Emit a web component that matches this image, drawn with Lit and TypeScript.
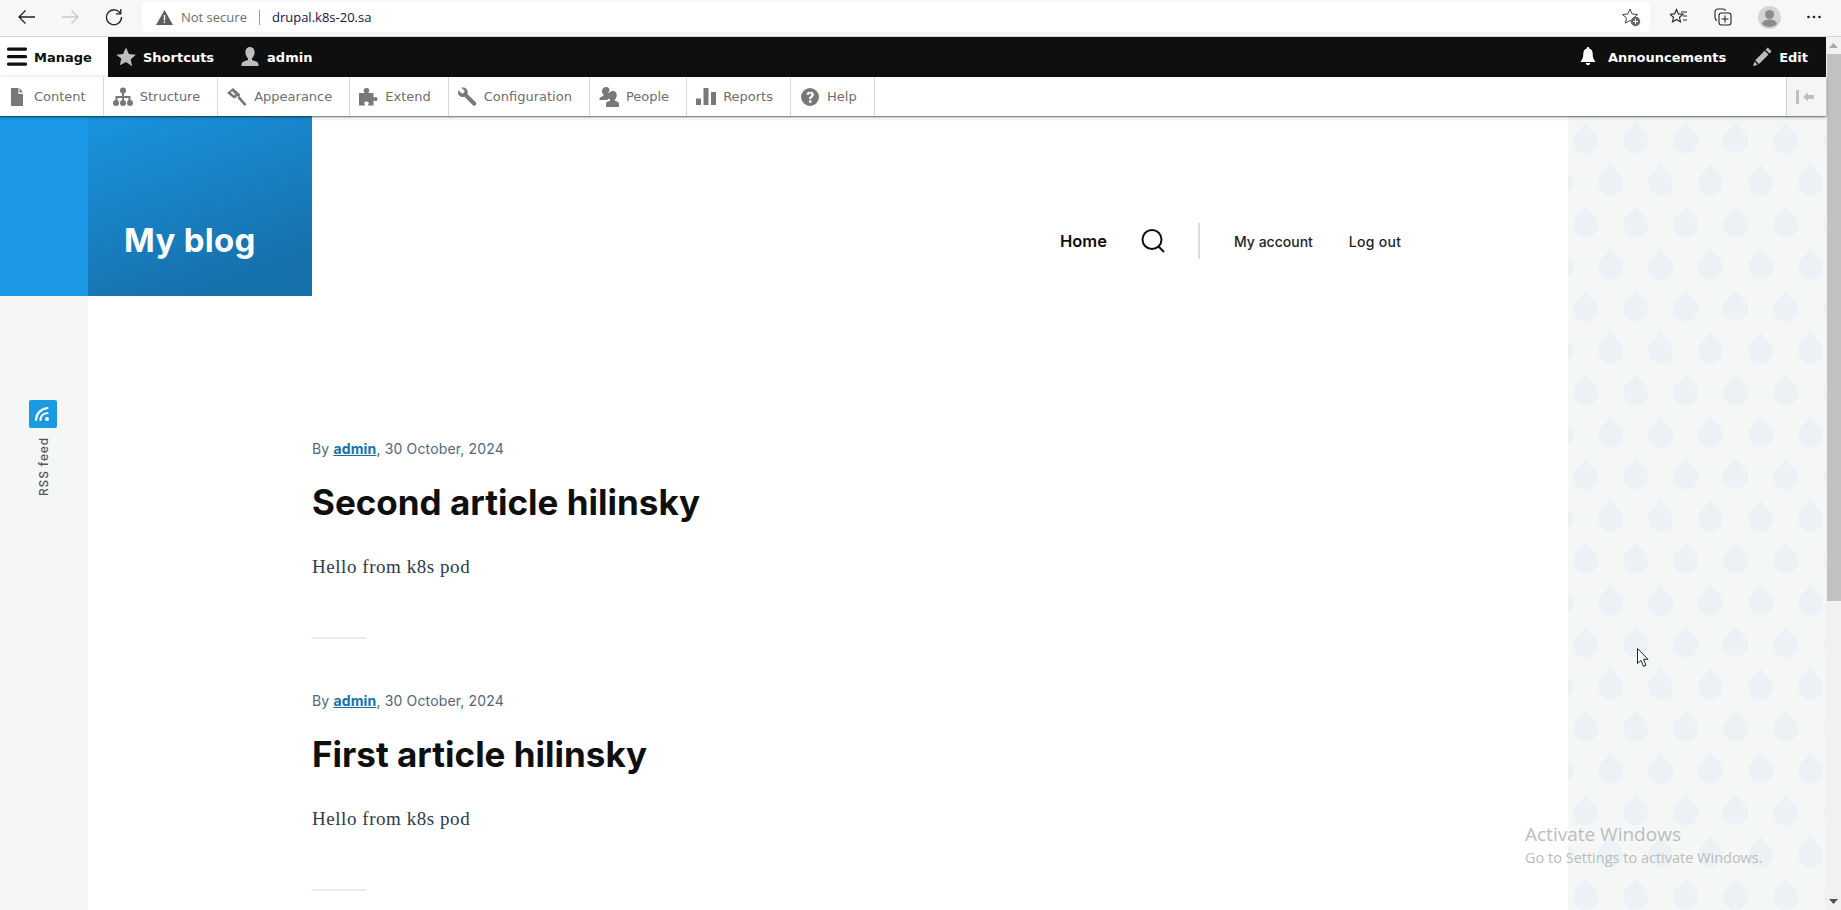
import { LitElement, html, css, svg } from "lit";
import { customElement } from "lit/decorators.js";

const G = "#787878";
const icons: Record<string, unknown> = {
  star: svg`<path fill="#bdbdbd" d="M10 0.5l2.9 6.4 6.9.8-5.1 4.7 1.4 6.9L10 15l-6.1 3.3 1.4-6.9L.2 7.7l6.9-.8z"/>`,
  person: svg`<path fill="#bdbdbd" d="M10 0c3 0 4.6 2.3 4.6 5.2 0 2.6-1.2 5-2.6 6.2v1.6c2.5 1 6.5 1.6 6.5 4.4V19h-17v-1.6c0-2.800 4-3.400 6.500-4.400v-1.600C6.600 10.200 5.400 7.800 5.400 5.200 5.400 2.300 7 0 10 0z"/>`,
  bell: svg`<path fill="#fff" d="M10 0c.8 0 1.200.6 1.200 1.400 2.600.6 3.500 2.800 3.500 5.600 0 4 1.300 6.200 3 8H2.300c1.700-1.800 3-4 3-8 0-2.800.9-5 3.500-5.600C8.800.6 9.200 0 10 0zM7.800 16h4.400c0 1.300-1 2.200-2.200 2.200S7.800 17.300 7.800 16z"/>`,
  pencil: svg`<path fill="#bdbdbd" d="M14.800.6l3.800 3.800-2.200 2.200-3.800-3.800zM11.700 3.700l3.800 3.800L6 17l-3.800-3.800zM1.500 14.600l3.100 3.100L0 19.200z"/>`,
  file: svg`<path fill="${G}" d="M4 1h7.500v6H16v12H4zM12.500 1L16 5.500h-3.500z"/>`,
  tree: svg`<g fill="${G}"><circle cx="10" cy="3.500" r="3"/><circle cx="3" cy="16" r="3"/><circle cx="10" cy="16" r="3"/><circle cx="17" cy="16" r="3"/><path d="M9 5h2v4h6.500v6h-2v-4H11v4H9v-4H4.500v4h-2V9H9z"/></g>`,
  hammer: svg`<path fill="${G}" d="M6 1l7.500 6.800-2 2.200-1.200-1-2 2.200-2-.2L0 6zM3.800 5.600l3.300 3 1.300-1.400-3.300-3zM10.500 11l1.800-2 7.200 8.200-1.900 1.800z"/>`,
  puzzle: svg`<path fill="${G}" d="M1 6h5c.6 0 .6-.7.1-1.300C5 3.400 6 1 8.500 1S12 3.400 10.900 4.700c-.5.6-.5 1.300.1 1.300h4.500v4c0 .7.700.8 1.200.300 1.300-1 2.800-.1 2.800 1.700s-1.500 2.700-2.800 1.700c-.5-.5-1.200-.4-1.200.3v4.500h-5c-.6 0-.6-.7-.1-1.300C11.500 16 10.500 14.500 8.500 14.500S5.500 16 6.600 17.200c.5.600.5 1.300-.1 1.300H1z"/>`,
  wrench: svg`<path fill="${G}" d="M6 .5c2.600 0 4.700 2.100 4.700 4.700 0 .6-.1 1.200-.3 1.700l8.400 8.400c.8.800.8 2-.1 2.800s-2 .9-2.800.1L7.500 9.700c-.6.2-1 .3-1.700.3C3.200 10 1 7.900 1 5.200c0-.7.100-1.300.4-1.900l3.300 3.300 2.300-.6.600-2.300L4.300.8c.5-.2 1.100-.3 1.700-.3z"/>`,
  people: svg`<path fill="${G}" d="M7.500 0c2 0 3 1.500 3 3.400-.5.700-1 1.800-1 3.100 0 1.500.5 2.700 1.300 3.800v.9c-1 .4-2 .9-2.800 1.800H.5v-1.200c0-1.800 2.500-2.200 4-2.900v-.9C3.500 7 3 5.500 3 3.800 3 1.500 5 0 7.500 0zM14 4c2.400 0 3.800 1.800 3.800 4 0 1.800-.7 3.500-1.800 4.500v1.300c1.500.7 4 1.200 4 3V20H7v-3.200c0-1.800 2.500-2.300 4-3v-1.300c-1.100-1-1.800-2.700-1.800-4.500C9.200 5.800 11.600 4 14 4z"/>`,
  bars: svg`<path fill="${G}" d="M0 11.500h5V18H0zM7.500 1h5v17h-5zM15 5h5v13h-5z"/>`,
  help: svg`<path fill="${G}" fill-rule="evenodd" d="M10 1a9 9 0 1 1 0 18 9 9 0 0 1 0-18zM9 13.300v2.500h2.400v-2.500zM10.200 4.500c-2 0-3.500 1-3.800 3l2.300.4c.2-.9.700-1.400 1.400-1.400.8 0 1.300.5 1.300 1.200 0 .6-.4 1-1 1.500-1 .8-1.400 1.500-1.400 2.900h2.300c0-.8.200-1.100 1-1.700 1-.8 1.600-1.600 1.600-2.800 0-2-1.700-3.100-4.200-3.100z"/>`,
};

const tabs: [string, string][] = [
  ["file", "Content"], ["tree", "Structure"], ["hammer", "Appearance"], ["puzzle", "Extend"],
  ["wrench", "Configuration"], ["people", "People"], ["bars", "Reports"], ["help", "Help"],
];

const ic = (n: string) => html`<svg class="ic" viewBox="0 0 20 20">${icons[n]}</svg>`;

@customElement("app-root")
export class AppRoot extends LitElement {
  static styles = css`
    :host { display: block; width: 1841px; height: 910px; overflow: hidden; position: relative; font-family: "DejaVu Sans", sans-serif; background: #fff; }
    .chrome { height: 34px; padding-bottom: 2px; border-bottom: 1px solid #d4d4d4; background: #f7f7f7; display: flex; align-items: center; font-family: "Open Sans", sans-serif; }
    .chrome svg { display: block; flex: none; }
    .navs { width: 142px; display: flex; flex: none; padding-left: 17px; gap: 25px; box-sizing: border-box; align-items: center; }
    .addr { width: 1508px; height: 30px; background: #fff; border-radius: 5px; display: flex; align-items: center; padding-left: 14px; box-sizing: border-box; font-size: 13px; }
    .ns { color: #6d6d6d; margin-left: 8px; }
    .sep { width: 1px; height: 15px; background: #9a9a9a; margin: 0 12px; }
    .url { color: #1a1040; flex: 1; }
    .addr .fav { margin-right: 9px; }
    .tools { display: flex; align-items: center; padding-left: 20px; gap: 26px; }
    .avatar { width: 23px; height: 23px; }

    .body { display: flex; height: 873px; }
    .vp { flex: 1; min-width: 0; display: flex; flex-direction: column; }
    .sb { width: 15px; background: #f1f1f1; display: flex; flex-direction: column; align-items: flex-end; }
    .arr { height: 17px; width: 15px; display: flex; align-items: center; justify-content: center; flex: none; }
    .thumb { height: 547px; width: 14px; background: #c1c1c1; flex: none; }
    .sp { flex: 1; }

    .bar { height: 40px; background: #0f0f0f; display: flex; align-items: center; color: #fff; font-size: 13px; font-weight: 700; flex: none; }
    .ic { width: 20px; height: 20px; display: block; flex: none; }
    .manage { width: 108px; height: 40px; background: #fff; color: #0f0f0f; display: flex; align-items: center; padding-left: 7px; gap: 7px; box-sizing: border-box; }
    .bi { display: flex; align-items: center; gap: 7px; }
    .short { margin-left: 8px; }
    .who { margin-left: 26px; }
    .right { margin-left: auto; display: flex; align-items: center; }
    .ann { gap: 10px; }
    .edit { margin-left: 27px; margin-right: 18px; gap: 6px; }

    .tray { height: 39px; background: #fff; display: flex; flex: none; box-shadow: 0 1px 1px rgba(0,0,0,.35), 0 1px 4px rgba(0,0,0,.3); position: relative; z-index: 2; font-size: 13px; color: #6e6e6e; }
    .tab { display: flex; align-items: center; border-right: 1px solid #d8d8d8; padding: 0 17px 0 9px; gap: 7px; box-sizing: border-box; }
    .tab:first-child { padding-left: 7px; }
    .tab:nth-child(4), .tab:nth-child(5) { padding-left: 8px; }
    .col { margin-left: auto; width: 40px; background: #f5f5f5; border-left: 1px solid #d0d0d0; display: flex; align-items: center; justify-content: center; padding-right: 4px; box-sizing: border-box; }

    .page { flex: 1; min-height: 0; display: grid; grid-template-columns: 88px 1480px 258px; }
    .left { background: #f5f7f7; display: flex; flex-direction: column; align-items: center; }
    .lblue { height: 180px; width: 100%; background: #1b98e6; flex: none; }
    .rss { margin: 104px 2px 0 0; display: flex; flex-direction: column; align-items: center; gap: 9px; color: #55565b; font-family: "Inter", sans-serif; font-size: 12px; font-weight: 500; letter-spacing: .85px; }
    .rssbox { width: 28px; height: 28px; background: #1b9ae4; border-radius: 2px; display: flex; align-items: center; justify-content: center; }
    .rsstext { writing-mode: vertical-rl; transform: rotate(180deg); }

    .main { background: #fff; display: flex; flex-direction: column; font-family: "Inter", sans-serif; }
    .head { height: 180px; display: flex; flex: none; }
    .logo { width: 224px; height: 180px; background: linear-gradient(160deg, #1a94e0 0%, #1670aa 85%); color: #fff; font-size: 33px; font-weight: 700; display: flex; align-items: center; padding: 68px 0 0 36px; box-sizing: border-box; letter-spacing: .3px; }
    .nav { display: flex; align-items: center; margin-left: 748px; height: 36px; align-self: flex-start; margin-top: 107px; }
    .home { font-weight: 600; font-size: 16.500px; color: #0f0f0f; width: 81px; }
    .vr { width: 2px; height: 36px; background: #dbe0e6; margin: 0 34px 0 33px; }
    .acc { font-size: 14px; font-weight: 500; color: #22222a; }
    .acc + .acc { margin-left: 36px; letter-spacing: .3px; }

    .arts { padding: 144px 0 0 224px; }
    .art { height: 252px; }
    .meta { font-size: 14px; line-height: 18px; color: #55657a; letter-spacing: .15px; }
    .meta a { color: #1670aa; font-weight: 700; text-decoration: underline; }
    h2 { margin: 23px 0 0; font-size: 35px; line-height: 42px; font-weight: 700; color: #0f0f0f; }
    .txt { margin: 31px 0 0; font-family: "Liberation Serif", serif; font-size: 19px; line-height: 26px; color: #2f3a48; letter-spacing: .55px; }
    .hr { width: 54px; height: 2px; background: #e9ecef; margin-top: 57px; }

    .pat { background: #f5f7f7; min-height: 0; overflow: hidden; }
    .pat svg { display: block; width: 258px; height: 794px; }

    .wm { position: absolute; left: 1525px; top: 822px; color: #bcbcbc; font-family: "Open Sans", sans-serif; pointer-events: none; z-index: 3; }
    .wm1 { font-size: 19px; line-height: 25px; }
    .wm2 { font-size: 14.500px; line-height: 18px; margin-top: 2px; }
    .cursor { position: absolute; left: 1637px; top: 648px; z-index: 3; display: block; }
  `;

  render() {
    return html`
      <div class="chrome">
        <div class="navs">
          <svg width="19" height="16" viewBox="0 0 19 16"><path fill="none" stroke="#222" stroke-width="1.300" d="M18 8H2M8.500 1.500L2 8l6.500 6.500"/></svg>
          <svg width="19" height="16" viewBox="0 0 19 16"><path fill="none" stroke="#c9c9c9" stroke-width="1.300" d="M1 8h16M10.500 1.500L17 8l-6.500 6.500"/></svg>
          <svg width="18" height="18" viewBox="0 0 18 18"><path fill="none" stroke="#222" stroke-width="1.300" d="M15.500 5.500A7.500 7.500 0 1 0 16.500 9M15.800 1v4.800H11"/></svg>
        </div>
        <div class="addr">
          <svg width="17" height="15" viewBox="0 0 17 15"><path fill="#5f5f5f" fill-rule="evenodd" d="M8.500 0L17 15H0zM7.800 5v5.500h1.400V5zM7.800 11.500V13h1.400v-1.500z"/></svg>
          <span class="ns">Not secure</span><span class="sep"></span><span class="url">drupal.k8s-20.sa</span>
          <svg class="fav" width="19" height="19" viewBox="0 0 19 19"><path fill="none" stroke="#444" d="M8 1l2.200 5 5.300.5-4 3.500 1 5L8 12.500 3.500 15l1-5-4-3.500L5.800 6z"/><circle cx="13.500" cy="13.500" r="4.700" fill="#666"/><path stroke="#fff" d="M13.500 11v5M11 13.500h5"/></svg>
        </div>
        <div class="tools">
          <svg width="18" height="18" viewBox="0 0 18 18"><path fill="none" stroke="#222" stroke-width="1.100" d="M6.500 1.500l1.900 4.400 4.600.4-3.500 3 1 4.600-4-2.400-4 2.400 1-4.600-3.500-3 4.600-.4zM11 4h6M13 8h4M13 12h4"/></svg>
          <svg width="18" height="18" viewBox="0 0 18 18"><path fill="none" stroke="#222" stroke-width="1.100" d="M3 12.500C1.500 12 1 11 1 9.500V4c0-1.800 1.200-3 3-3h5c1.300 0 2.200.6 2.700 1.800M7.500 5h7c1.400 0 2.500 1.100 2.500 2.500v7c0 1.400-1.100 2.500-2.500 2.500h-7C6.100 17 5 15.900 5 14.500v-7C5 6.100 6.100 5 7.500 5zM11 7.500v7M7.500 11h7"/></svg>
          <svg class="avatar" viewBox="0 0 23 23"><circle cx="11.500" cy="11.500" r="11.500" fill="#d6d4d0"/><circle cx="11.500" cy="8.500" r="4.500" fill="#8c8c8c"/><path fill="#8c8c8c" d="M4 18c1-3.500 4-4.500 7.500-4.500S18 14.500 19 18c-2 2-4.500 3-7.500 3S6 20 4 18z"/></svg>
          <svg width="14" height="4" viewBox="0 0 14 4"><g fill="#222"><circle cx="1.500" cy="2" r="1.300"/><circle cx="7" cy="2" r="1.300"/><circle cx="12.500" cy="2" r="1.300"/></g></svg>
        </div>
      </div>

      <div class="body">
        <div class="vp">
          <div class="bar">
            <div class="manage">
              <svg class="ic" viewBox="0 0 20 20"><path fill="#0f0f0f" d="M1.500 0.500h17a1.500 1.500 0 0 1 0 3.200h-17a1.500 1.500 0 0 1 0-3.200zM1.500 8h17a1.500 1.500 0 0 1 0 3.200h-17a1.500 1.500 0 0 1 0-3.200zM1.500 15.500h17a1.500 1.500 0 0 1 0 3.200h-17a1.500 1.500 0 0 1 0-3.200z"/></svg>
              Manage
            </div>
            <div class="bi short">${ic("star")}Shortcuts</div>
            <div class="bi who">${ic("person")}admin</div>
            <div class="right">
              <div class="bi ann">${ic("bell")}Announcements</div>
              <div class="bi edit">${ic("pencil")}Edit</div>
            </div>
          </div>
          <div class="tray">
            ${tabs.map(([i, t]) => html`<div class="tab">${ic(i)}<span>${t}</span></div>`)}
            <div class="col">
              <svg width="18" height="16" viewBox="0 0 18 16"><path fill="#bfbfbf" d="M0 1h3v14H0zM7 8l5-4.500V6h6v4h-6v2.500z"/></svg>
            </div>
          </div>
          <div class="page">
            <div class="left">
              <div class="lblue"></div>
              <div class="rss">
                <div class="rssbox">
                  <svg width="18" height="16" viewBox="0 0 18 16"><g fill="none" stroke="#fff" stroke-width="2.200" stroke-linecap="round"><path d="M2 14C2 8 6.500 3 13.500 2"/><path d="M6.500 14c0-3.500 2.500-6.500 7-7"/></g><circle cx="13" cy="13" r="2" fill="#fff"/></svg>
                </div>
                <span class="rsstext">RSS feed</span>
              </div>
            </div>
            <div class="main">
              <div class="head">
                <div class="logo">My blog</div>
                <div class="nav">
                  <span class="home">Home</span>
                  <svg width="24" height="24" viewBox="0 0 24 24"><g fill="none" stroke="#0f0f0f" stroke-width="2"><circle cx="11" cy="10.500" r="9.500"/><path d="M17.500 17.500l5.500 5.500"/></g></svg>
                  <span class="vr"></span>
                  <span class="acc">My account</span><span class="acc">Log out</span>
                </div>
              </div>
              <div class="arts">
                ${["Second article hilinsky", "First article hilinsky"].map((t) => html`
                  <article class="art">
                    <div class="meta">By <a>admin</a>, 30 October, 2024</div>
                    <h2>${t}</h2>
                    <p class="txt">Hello from k8s pod</p>
                    <div class="hr"></div>
                  </article>`)}
              </div>
            </div>
            <div class="pat">
              <svg viewBox="0 0 258 794">
                <defs>
                  <path id="d" d="M0 0Q4 6 9.200 10.500A12.500 12.500 0 1 1-9.200 10.500Q-4 6 0 0Z" fill="#ebf1f5"/>
                  <pattern id="p" width="50" height="84" patternUnits="userSpaceOnUse">
                    <use href="#d" x="17.600" y="6"/>
                    <use href="#d" x="42.600" y="48"/>
                    <use href="#d" x="-7.400" y="48"/>
                  </pattern>
                </defs>
                <rect width="258" height="794" fill="url(#p)"/>
              </svg>
            </div>
          </div>
        </div>
        <div class="sb">
          <div class="arr"><svg width="9" height="5" viewBox="0 0 9 5"><path fill="#a8a8a8" d="M4.500 0L9 5H0z"/></svg></div>
          <div class="thumb"></div>
          <div class="sp"></div>
          <div class="arr"><svg width="9" height="5" viewBox="0 0 9 5"><path fill="#505050" d="M0 0h9L4.500 5z"/></svg></div>
        </div>
      </div>

      <svg class="cursor" width="13" height="20" viewBox="0 0 13 20"><path fill="#fff" stroke="#1a2130" d="M.5.500v15l3.500-3.200 2.500 6 2.500-1-2.500-6H11z"/></svg>
      <div class="wm"><div class="wm1">Activate Windows</div><div class="wm2">Go to Settings to activate Windows.</div></div>
    `;
  }
}
